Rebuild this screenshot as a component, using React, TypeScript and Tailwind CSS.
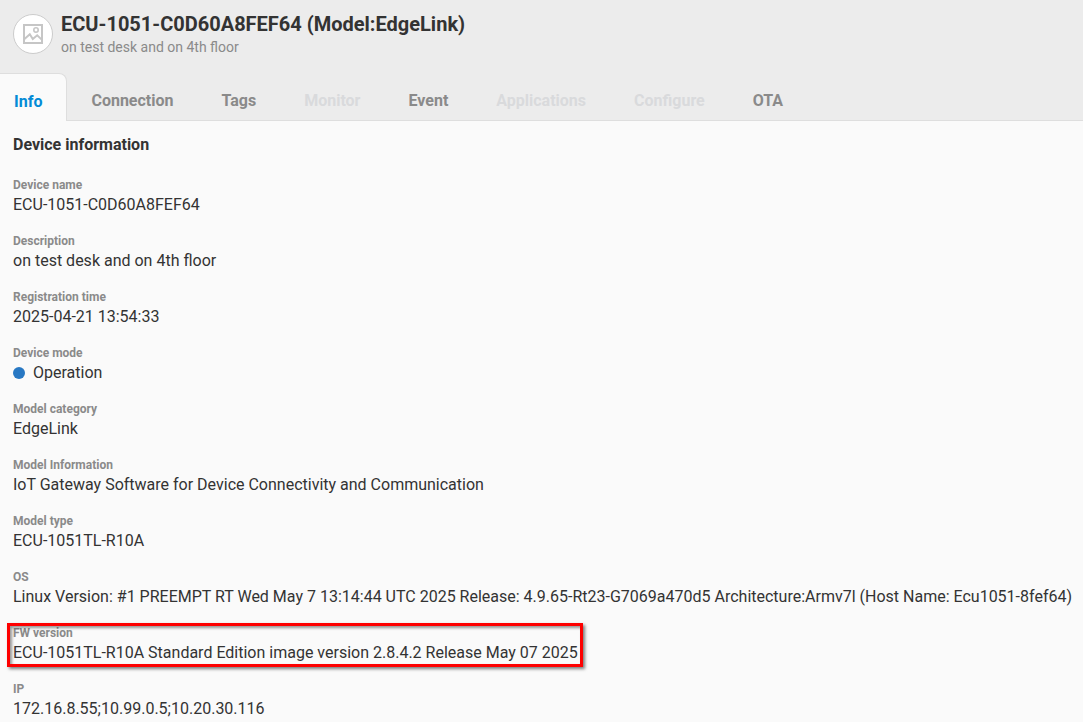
import type { ReactNode } from 'react';

type Tab = { label: string; active?: boolean; disabled?: boolean };

type Field = {
  label: string;
  value: ReactNode;
  highlighted?: boolean;
};

const tabs: Tab[] = [
  { label: 'Info', active: true },
  { label: 'Connection' },
  { label: 'Tags' },
  { label: 'Monitor', disabled: true },
  { label: 'Event' },
  { label: 'Applications', disabled: true },
  { label: 'Configure', disabled: true },
  { label: 'OTA' },
];

const fields: Field[] = [
  { label: 'Device name', value: 'ECU-1051-C0D60A8FEF64' },
  { label: 'Description', value: 'on test desk and on 4th floor' },
  { label: 'Registration time', value: '2025-04-21 13:54:33' },
  {
    label: 'Device mode',
    value: (
      <span className="flex items-center gap-2">
        <span className="size-3 rounded-full bg-[#2878c3]" />
        Operation
      </span>
    ),
  },
  { label: 'Model category', value: 'EdgeLink' },
  { label: 'Model Information', value: 'IoT Gateway Software for Device Connectivity and Communication' },
  { label: 'Model type', value: 'ECU-1051TL-R10A' },
  {
    label: 'OS',
    value:
      'Linux Version: #1 PREEMPT RT Wed May 7 13:14:44 UTC 2025 Release: 4.9.65-Rt23-G7069a470d5 Architecture:Armv7l (Host Name: Ecu1051-8fef64)',
  },
  {
    label: 'FW version',
    value: 'ECU-1051TL-R10A Standard Edition image version 2.8.4.2 Release May 07 2025',
    highlighted: true,
  },
  { label: 'IP', value: '172.16.8.55;10.99.0.5;10.20.30.116' },
];

function PictureIcon() {
  return (
    <svg viewBox="0 0 20 20" className="size-5" fill="none" stroke="#c6c6c6" strokeWidth="2" aria-hidden="true">
      <rect x="1" y="1" width="18" height="18" />
      <circle cx="13" cy="6" r="2.2" strokeWidth="1.6" />
      <path d="M1.5 15 L6.8 10.3 L9.8 15 L14.2 11.3 L18.5 15.4" strokeWidth="2" />
    </svg>
  );
}

function tabClass(tab: Tab) {
  if (tab.active) {
    return 'rounded-tr-lg border-t border-r border-[#dedede] bg-[#fafafa] pr-6 pl-3.5 text-[#048bd6]';
  }
  return tab.disabled
    ? 'border-b border-[#dedede] px-6 text-[#d9dadc]'
    : 'border-b border-[#dedede] px-6 text-[#8a8a8a]';
}

export default function App() {
  return (
    <div className="min-h-screen bg-[#fafafa] font-['Roboto',sans-serif] text-base text-[#333333]">
      <header className="bg-[#ececec]">
        <div className="flex gap-2 px-[13px] pt-3 pb-[15px]">
          <div className="mt-0.5 flex size-10 shrink-0 items-center justify-center rounded-full border border-[#cccccc] bg-white">
            <PictureIcon />
          </div>
          <div>
            <h1 className="text-xl leading-6 font-bold">ECU-1051-C0D60A8FEF64 (Model:EdgeLink)</h1>
            <p className="text-sm leading-[22px] text-[#8a8a8a]">on test desk and on 4th floor</p>
          </div>
        </div>
        <div role="tablist" className="flex h-12 font-bold">
          {tabs.map((tab) => (
            <button
              key={tab.label}
              type="button"
              role="tab"
              aria-selected={Boolean(tab.active)}
              disabled={tab.disabled}
              className={`flex items-center pt-2 ${tabClass(tab)}`}
            >
              {tab.label}
            </button>
          ))}
          <div className="flex-1 border-b border-[#dedede]" />
        </div>
      </header>

      <main className="px-[13px] pt-3">
        <h2 className="mb-5 font-bold">Device information</h2>
        <dl className="flex flex-col gap-4">
          {fields.map((field) => (
            <div key={field.label} className="relative w-fit whitespace-nowrap">
              <dt className="text-xs font-bold text-[#8a8a8a]">{field.label}</dt>
              <dd>{field.value}</dd>
              {field.highlighted && (
                <div className="pointer-events-none absolute -top-0.5 -right-[5px] -bottom-0.5 -left-1.5 border-3 border-[#fe0000] shadow-[2px_2px_3px_rgba(0,0,0,0.5),inset_2px_2px_3px_rgba(0,0,0,0.4)]" />
              )}
            </div>
          ))}
        </dl>
      </main>
    </div>
  );
}
